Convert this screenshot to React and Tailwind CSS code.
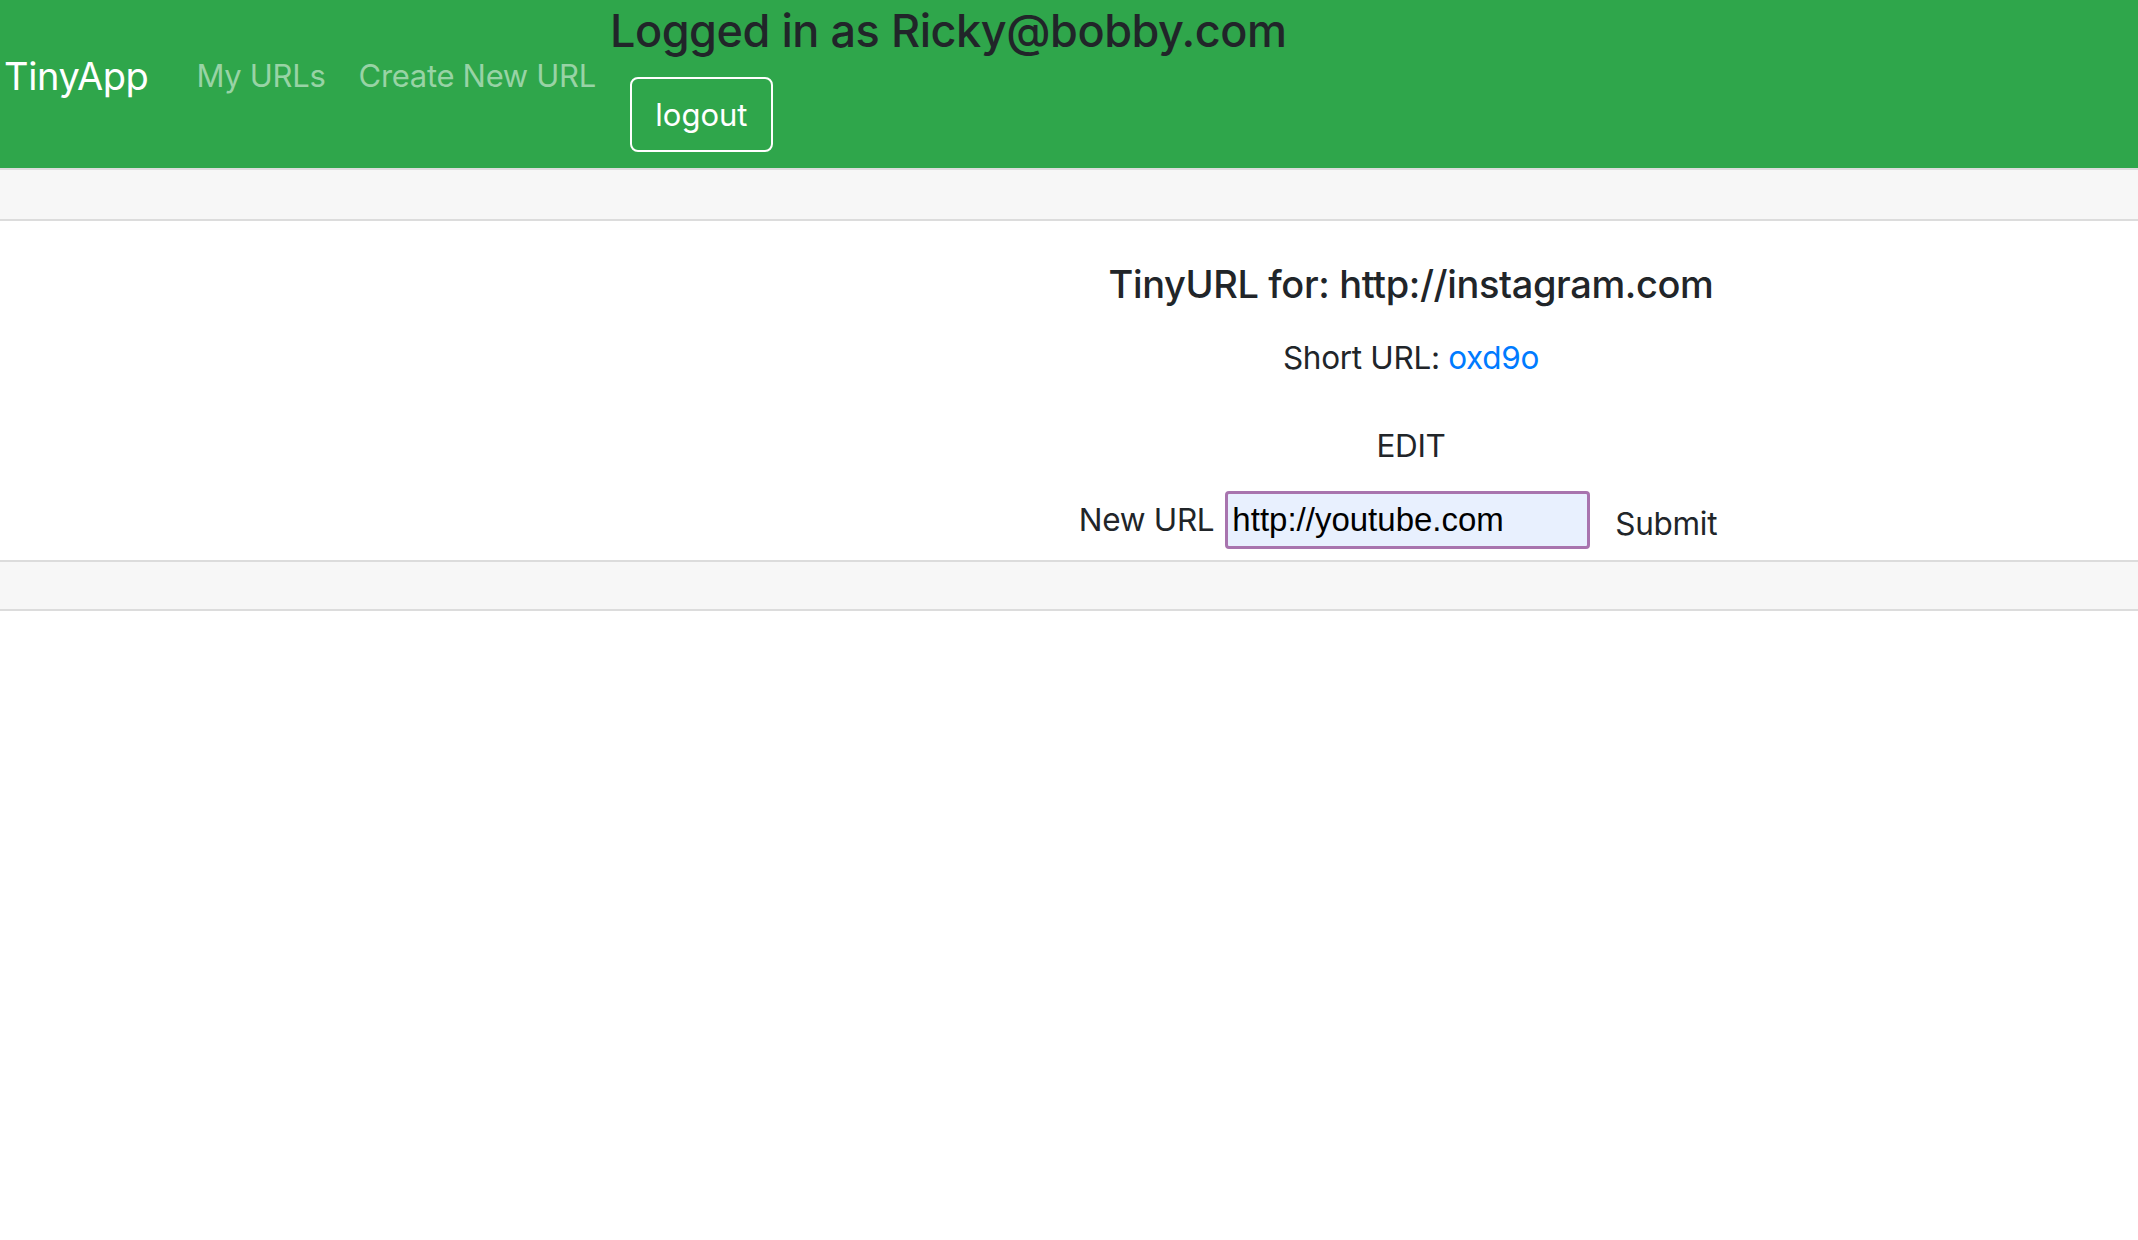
import React, { useState } from "react";

const EditUrlPage = () => {
  const [newUrl, setNewUrl] = useState("http://youtube.com");

  return (
    <div className="min-h-screen w-full bg-white font-['Inter','Liberation_Sans',sans-serif] text-[#212529]">
      {/* Navbar */}
      <nav className="flex items-start h-[168px] bg-[#2fa64b]">
        <a className="ml-[4px] mt-[48px] text-[38px] leading-[57px] text-white tracking-[-0.01em]">
          TinyApp
        </a>
        <a className="ml-[48px] mt-[53px] text-[31px] leading-[46px] text-[#98d3a5] tracking-[-0.01em]">
          My URLs
        </a>
        <a className="ml-[33px] mt-[53px] text-[31px] leading-[46px] text-[#98d3a5] tracking-[-0.01em]">
          Create New URL
        </a>
        <div className="ml-[14px] flex flex-col">
          <h4 className="mt-[3px] text-[45px] leading-[56px] font-medium text-[#212529] tracking-[-0.01em]">
            Logged in as Ricky@bobby.com
          </h4>
          <button className="ml-[20px] mt-[18px] w-[143px] h-[75px] border-2 border-white rounded-[8px] text-white text-[31px] leading-none">
            logout
          </button>
        </div>
      </nav>

      {/* Card */}
      <div className="border-t-2 border-[#dcdcdc]">
        <div className="h-[51px] bg-[#f7f7f7] border-b-2 border-[#dcdcdc]" />
        <div className="h-[339px] pl-[684px] text-center">
          <h5 className="pt-[40px] text-[38px] leading-[47px] font-medium tracking-[-0.01em]">
            TinyURL for: http://instagram.com
          </h5>
          <p className="mt-[27px] text-[31.5px] leading-[46px] tracking-[-0.01em]">
            Short URL: <a className="text-[#007bff]">oxd9o</a>
          </p>
          <p className="mt-[42px] text-[31.5px] leading-[46px] tracking-[-0.01em]">EDIT</p>
          <form
            className="mt-[22px] mr-[26px] flex items-center justify-center"
            onSubmit={(e) => e.preventDefault()}
          >
            <label className="text-[31.5px] leading-[46px] tracking-[-0.01em]">New URL</label>
            <input
              type="text"
              value={newUrl}
              onChange={(e) => setNewUrl(e.target.value)}
              className="ml-[11px] w-[365px] h-[58px] px-[4px] border-[3px] border-[#a874ae] rounded-[4px] bg-[#e8f0fe] text-black text-[33px] font-['Liberation_Sans',sans-serif] outline-none"
            />
            <button className="ml-[25px] mt-[8px] text-[31.5px] leading-[46px] tracking-[-0.01em]">
              Submit
            </button>
          </form>
        </div>
        <div className="h-[51px] bg-[#f7f7f7] border-y-2 border-[#dcdcdc]" />
      </div>
    </div>
  );
};

export default EditUrlPage;
